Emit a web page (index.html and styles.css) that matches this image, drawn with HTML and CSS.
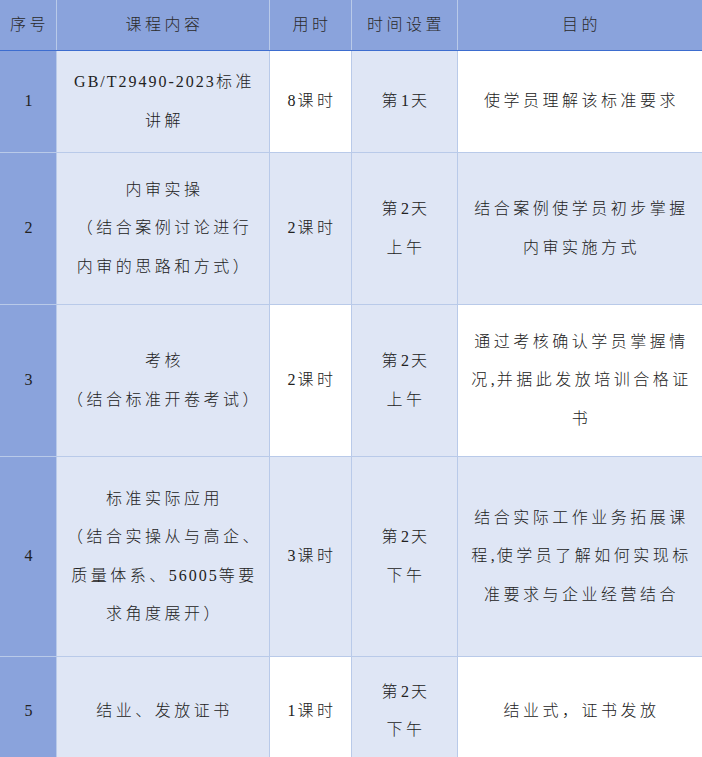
FILE: index.html
```html
<!DOCTYPE html>
<html lang="zh-CN">
<head>
<meta charset="utf-8">
<title>课程安排</title>
<link rel="stylesheet" href="styles.css">
</head>
<body>
<div class="sheet">
  <div class="grid head">
    <div class="cell"><p class="txt">序号</p></div>
    <div class="cell"><p class="txt">课程内容</p></div>
    <div class="cell"><p class="txt">用时</p></div>
    <div class="cell"><p class="txt">时间设置</p></div>
    <div class="cell"><p class="txt">目的</p></div>
  </div>
  <div class="grid body">
    <div class="cell num"><p class="txt"><span class="lat">1</span></p></div>
    <div class="cell band"><p class="txt"><span class="lat">GB/T29490-2023</span>标准<br>讲解</p></div>
    <div class="cell plain"><p class="txt"><span class="lat">8</span>课时</p></div>
    <div class="cell band"><p class="txt">第<span class="lat">1</span>天</p></div>
    <div class="cell plain"><p class="txt">使学员理解该标准要求</p></div>

    <div class="cell num"><p class="txt"><span class="lat">2</span></p></div>
    <div class="cell band"><p class="txt">内审实操<br>（结合案例讨论进行<br>内审的思路和方式）</p></div>
    <div class="cell band"><p class="txt"><span class="lat">2</span>课时</p></div>
    <div class="cell band"><p class="txt">第<span class="lat">2</span>天<br>上午</p></div>
    <div class="cell band"><p class="txt">结合案例使学员初步掌握<br>内审实施方式</p></div>

    <div class="cell num"><p class="txt"><span class="lat">3</span></p></div>
    <div class="cell band"><p class="txt">考核<br>（结合标准开卷考试）</p></div>
    <div class="cell plain"><p class="txt"><span class="lat">2</span>课时</p></div>
    <div class="cell band"><p class="txt">第<span class="lat">2</span>天<br>上午</p></div>
    <div class="cell plain"><p class="txt">通过考核确认学员掌握情<br>况<span class="lat">,</span>并据此发放培训合格证<br>书</p></div>

    <div class="cell num"><p class="txt"><span class="lat">4</span></p></div>
    <div class="cell band"><p class="txt">标准实际应用<br>（结合实操从与高企、<br>质量体系、<span class="lat">56005</span>等要<br>求角度展开）</p></div>
    <div class="cell band"><p class="txt"><span class="lat">3</span>课时</p></div>
    <div class="cell band"><p class="txt">第<span class="lat">2</span>天<br>下午</p></div>
    <div class="cell band"><p class="txt">结合实际工作业务拓展课<br>程<span class="lat">,</span>使学员了解如何实现标<br>准要求与企业经营结合</p></div>

    <div class="cell num"><p class="txt"><span class="lat">5</span></p></div>
    <div class="cell band"><p class="txt">结业、发放证书</p></div>
    <div class="cell plain"><p class="txt"><span class="lat">1</span>课时</p></div>
    <div class="cell band"><p class="txt">第<span class="lat">2</span>天<br>下午</p></div>
    <div class="cell plain"><p class="txt">结业式，证书发放</p></div>
  </div>
</div>
</body>
</html>
```
FILE: styles.css
```css
html, body {
  margin: 0;
  padding: 0;
  width: 702px;
  height: 757px;
  overflow: hidden;
  background: #ffffff;
}

.sheet {
  width: 702px;
  font-family: "Liberation Serif", "Noto Sans CJK SC", serif;
  font-size: 16px;
  font-weight: 300;
  color: #222222;
  letter-spacing: 3.5px;
}

.grid {
  display: grid;
  grid-template-columns: 56px 212px 81px 105px 1fr;
  column-gap: 1px;
  background: #b9cae9;
}

.head {
  grid-template-rows: 50px;
  border-bottom: 1px solid #3d6dcf;
}

.head .cell {
  background: #8aa3dc;
  color: #2a2a2a;
}

.body {
  grid-template-rows: 101px 151px 151px 199px 108px;
  row-gap: 1px;
}

.cell {
  display: flex;
  align-items: center;
  justify-content: center;
  padding-left: 3px;
}

.txt {
  margin: 0;
  text-align: center;
  line-height: 38.5px;
  white-space: nowrap;
}

.num {
  background: #8aa3dc;
}

.band {
  background: #dfe6f5;
}

.plain {
  background: #ffffff;
}

.lat {
  letter-spacing: 2px;
}
```
